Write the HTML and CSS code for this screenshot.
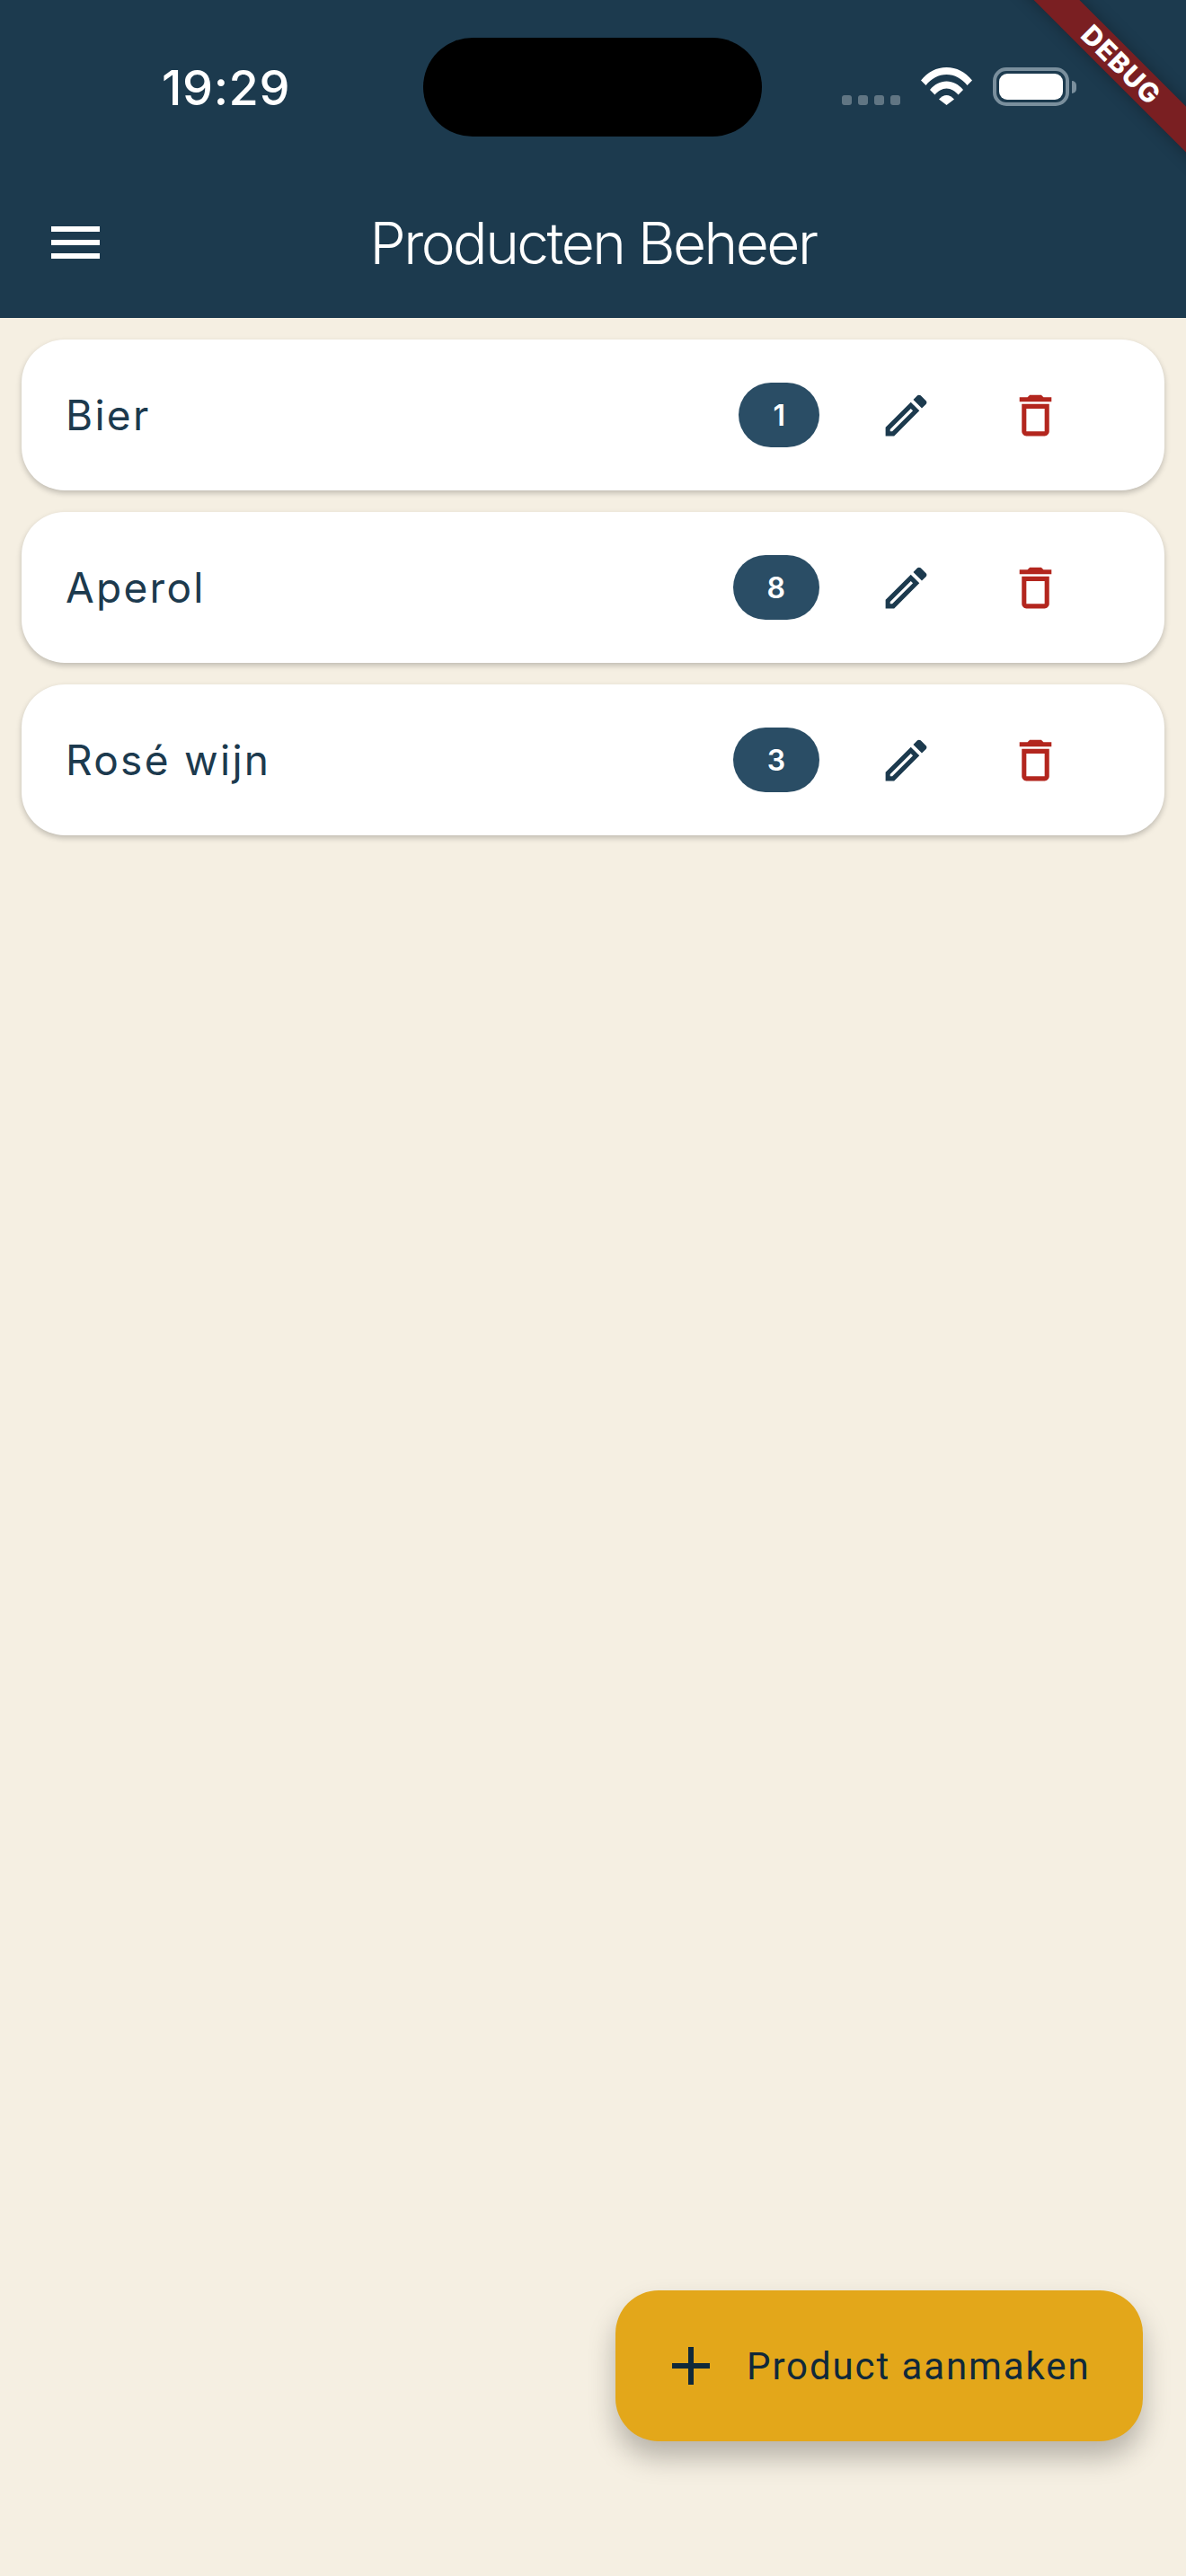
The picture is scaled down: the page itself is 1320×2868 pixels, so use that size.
FILE: index.html
```html
<!DOCTYPE html>
<html lang="en">
<head>
  <meta charset="UTF-8" />
  <meta name="viewport" content="width=device-width, initial-scale=1" />
  <title>Producten Beheer</title>
  <link rel="stylesheet" href="styles.css">
</head>
<body>
  <div class="debug-corner">
    <div class="debug-banner">DEBUG</div>
  </div>

  <header class="app-header">
    <div class="status-bar">
      <span class="status-time">19:29</span>
      <div class="island"></div>
      <div class="status-icons">
        <div class="signal">
          <span></span><span></span><span></span><span></span>
        </div>
        <svg class="wifi" viewBox="0 0 57 42" aria-hidden="true">
          <path d="M0 14.500C7.500 5 17.500 0 28.500 0S49.500 5 57 14.500L51.500 20C45.500 12.500 37.500 8 28.500 8S11.500 12.500 5.500 20z"/>
          <path d="M10 25C15 19 21.500 15.500 28.500 15.500S42 19 47 25L41.500 30.500C38 26.500 33.500 23.500 28.500 23.500S19 26.500 15.500 30.500z"/>
          <path d="M20 35.500C22.500 33 25.500 31 28.500 31S34.500 33 37 35.500L28.500 42z"/>
        </svg>
        <div class="battery">
          <div class="battery-body"><div class="battery-level"></div></div>
          <div class="battery-nub"></div>
        </div>
      </div>
    </div>
    <div class="toolbar">
      <button class="menu-btn" aria-label="Menu">
        <span></span><span></span><span></span>
      </button>
      <h1 class="page-title">Producten Beheer</h1>
    </div>
  </header>

  <main class="product-list">
    <div class="product-card">
      <span class="product-name">Bier</span>
      <span class="stock-badge">1</span>
      <button class="icon-btn" aria-label="Bewerken">
        <svg class="icon icon-edit" viewBox="0 0 24 24"><path d="M14.060 9.020l.92.92L5.920 19H5v-.92l9.060-9.060M17.660 3c-.25 0-.51.1-.7.29l-1.830 1.830 3.750 3.750 1.830-1.830c.39-.39.39-1.020 0-1.410l-2.340-2.340c-.2-.2-.45-.29-.71-.29zm-3.600 3.190L3 17.250V21h3.750L17.810 9.940l-3.750-3.750z"/></svg>
      </button>
      <button class="icon-btn" aria-label="Verwijderen">
        <svg class="icon icon-delete" viewBox="0 0 24 24"><path d="M16 9v10H8V9h8m-1.500-6h-5l-1 1H5v2h14V4h-3.500l-1-1zM18 7H6v12c0 1.100.9 2 2 2h8c1.100 0 2-.9 2-2V7z"/></svg>
      </button>
    </div>

    <div class="product-card">
      <span class="product-name">Aperol</span>
      <span class="stock-badge">8</span>
      <button class="icon-btn" aria-label="Bewerken">
        <svg class="icon icon-edit" viewBox="0 0 24 24"><path d="M14.060 9.020l.92.92L5.920 19H5v-.92l9.060-9.060M17.660 3c-.25 0-.51.1-.7.29l-1.830 1.830 3.750 3.750 1.830-1.830c.39-.39.39-1.020 0-1.410l-2.340-2.340c-.2-.2-.45-.29-.71-.29zm-3.600 3.190L3 17.250V21h3.750L17.810 9.940l-3.750-3.750z"/></svg>
      </button>
      <button class="icon-btn" aria-label="Verwijderen">
        <svg class="icon icon-delete" viewBox="0 0 24 24"><path d="M16 9v10H8V9h8m-1.500-6h-5l-1 1H5v2h14V4h-3.500l-1-1zM18 7H6v12c0 1.100.9 2 2 2h8c1.100 0 2-.9 2-2V7z"/></svg>
      </button>
    </div>

    <div class="product-card">
      <span class="product-name">Rosé wijn</span>
      <span class="stock-badge">3</span>
      <button class="icon-btn" aria-label="Bewerken">
        <svg class="icon icon-edit" viewBox="0 0 24 24"><path d="M14.060 9.020l.92.92L5.920 19H5v-.92l9.060-9.060M17.660 3c-.25 0-.51.1-.7.29l-1.830 1.830 3.750 3.750 1.830-1.830c.39-.39.39-1.020 0-1.410l-2.340-2.340c-.2-.2-.45-.29-.71-.29zm-3.600 3.190L3 17.250V21h3.750L17.810 9.940l-3.750-3.750z"/></svg>
      </button>
      <button class="icon-btn" aria-label="Verwijderen">
        <svg class="icon icon-delete" viewBox="0 0 24 24"><path d="M16 9v10H8V9h8m-1.500-6h-5l-1 1H5v2h14V4h-3.500l-1-1zM18 7H6v12c0 1.100.9 2 2 2h8c1.100 0 2-.9 2-2V7z"/></svg>
      </button>
    </div>
  </main>

  <button class="fab">
    <svg class="fab-icon" viewBox="0 0 24 24"><path d="M19 13h-6v6h-2v-6H5v-2h6V5h2v6h6v2z"/></svg>
    <span class="fab-label">Product aanmaken</span>
  </button>
</body>
</html>
```

FILE: styles.css
```css
* {
  box-sizing: border-box;
}

html,
body {
  margin: 0;
  padding: 0;
}

body {
  position: relative;
  width: 1320px;
  height: 2868px;
  overflow: hidden;
  font-family: 'Inter', 'Noto Sans', sans-serif;
  background: #f5efe2;
  color: #1c3a4e;
}

button {
  border: none;
  background: none;
  padding: 0;
  font: inherit;
  color: inherit;
  cursor: pointer;
}

/* header */

.app-header {
  height: 354px;
  background: #1c3a4e;
  color: white;
}

.status-bar {
  height: 186px;
  padding-top: 42px;
  display: grid;
  grid-template-columns: 471px 377px 1fr;
  align-items: start;
}

.status-time {
  height: 110px;
  padding-left: 180px;
  display: flex;
  align-items: center;
  font-size: 54px;
  font-weight: 500;
  letter-spacing: 0.6px;
}

.island {
  height: 110px;
  border-radius: 55px;
  background: black;
}

.status-icons {
  padding: 33px 0 0 89px;
  height: 76px;
  display: flex;
  align-items: flex-start;
}

.signal {
  margin-top: 31px;
  display: flex;
  gap: 7px;
}

.signal span {
  width: 11px;
  height: 11px;
  border-radius: 3px;
  background: rgba(255, 255, 255, 0.3);
}

.wifi {
  margin-left: 23px;
  width: 57px;
  height: 42px;
  fill: white;
}

.battery {
  margin-left: 23px;
  display: flex;
  align-items: center;
  gap: 3px;
}

.battery-body {
  width: 85px;
  height: 43px;
  padding: 3px;
  border: 4px solid #7a8f9d;
  border-radius: 15px;
}

.battery-level {
  height: 100%;
  border-radius: 9px;
  background: white;
}

.battery-nub {
  width: 5px;
  height: 14px;
  border-radius: 0 5px 5px 0;
  background: #7a8f9d;
}

.toolbar {
  position: relative;
  height: 168px;
  display: flex;
  align-items: center;
  justify-content: center;
}

.menu-btn {
  position: absolute;
  left: 57px;
  top: 66px;
  width: 54px;
  height: 36px;
  display: flex;
  flex-direction: column;
  justify-content: space-between;
}

.menu-btn span {
  height: 6px;
  background: white;
}

.page-title {
  margin: 0;
  font-size: 64px;
  font-weight: 300;
  letter-spacing: -2.5px;
}

/* product cards */

.product-list {
  padding: 24px;
  display: flex;
  flex-direction: column;
  gap: 24px;
}

.product-card {
  height: 168px;
  padding: 0 72px 0 49px;
  display: flex;
  align-items: center;
  background: white;
  border-radius: 48px;
  box-shadow: 0 3px 6px rgba(0, 0, 0, 0.22);
}

.product-name {
  flex: 1;
  font-size: 46px;
  letter-spacing: 2.3px;
}

.stock-badge {
  height: 72px;
  padding: 0 38px;
  margin-right: 24px;
  display: flex;
  align-items: center;
  justify-content: center;
  border-radius: 36px;
  background: #2a4d65;
  color: white;
  font-size: 32px;
  font-weight: 600;
}

.icon-btn {
  width: 144px;
  height: 144px;
  display: flex;
  align-items: center;
  justify-content: center;
}

.icon {
  width: 61px;
  height: 61px;
}

.icon-edit {
  fill: #1c3a4e;
}

.icon-delete {
  fill: #b3261e;
}

/* floating button */

.fab {
  position: absolute;
  right: 48px;
  bottom: 150px;
  width: 587px;
  height: 168px;
  padding-left: 48px;
  display: flex;
  align-items: center;
  background: #e3a71a;
  border-radius: 48px;
  box-shadow: 0 18px 30px rgba(0, 0, 0, 0.25);
}

.fab-icon {
  width: 72px;
  height: 72px;
  fill: #10293a;
}

.fab-label {
  margin-left: 26px;
  font-family: 'Roboto', sans-serif;
  font-size: 42px;
  font-weight: 400;
  letter-spacing: 1.9px;
  color: #10293a;
}

/* debug ribbon, clipped to the top right corner */

.debug-corner {
  position: absolute;
  top: 0;
  right: 0;
  width: 240px;
  height: 240px;
  overflow: hidden;
  z-index: 2;
}

.debug-banner {
  position: absolute;
  left: -32px;
  top: 54px;
  width: 400px;
  height: 36px;
  transform: rotate(45deg);
  display: flex;
  align-items: center;
  justify-content: center;
  background: #7a1f22;
  box-shadow: 0 0 18px rgba(0, 0, 0, 0.3);
  color: white;
  font-size: 30px;
  font-weight: 800;
  letter-spacing: 1.2px;
}
```
